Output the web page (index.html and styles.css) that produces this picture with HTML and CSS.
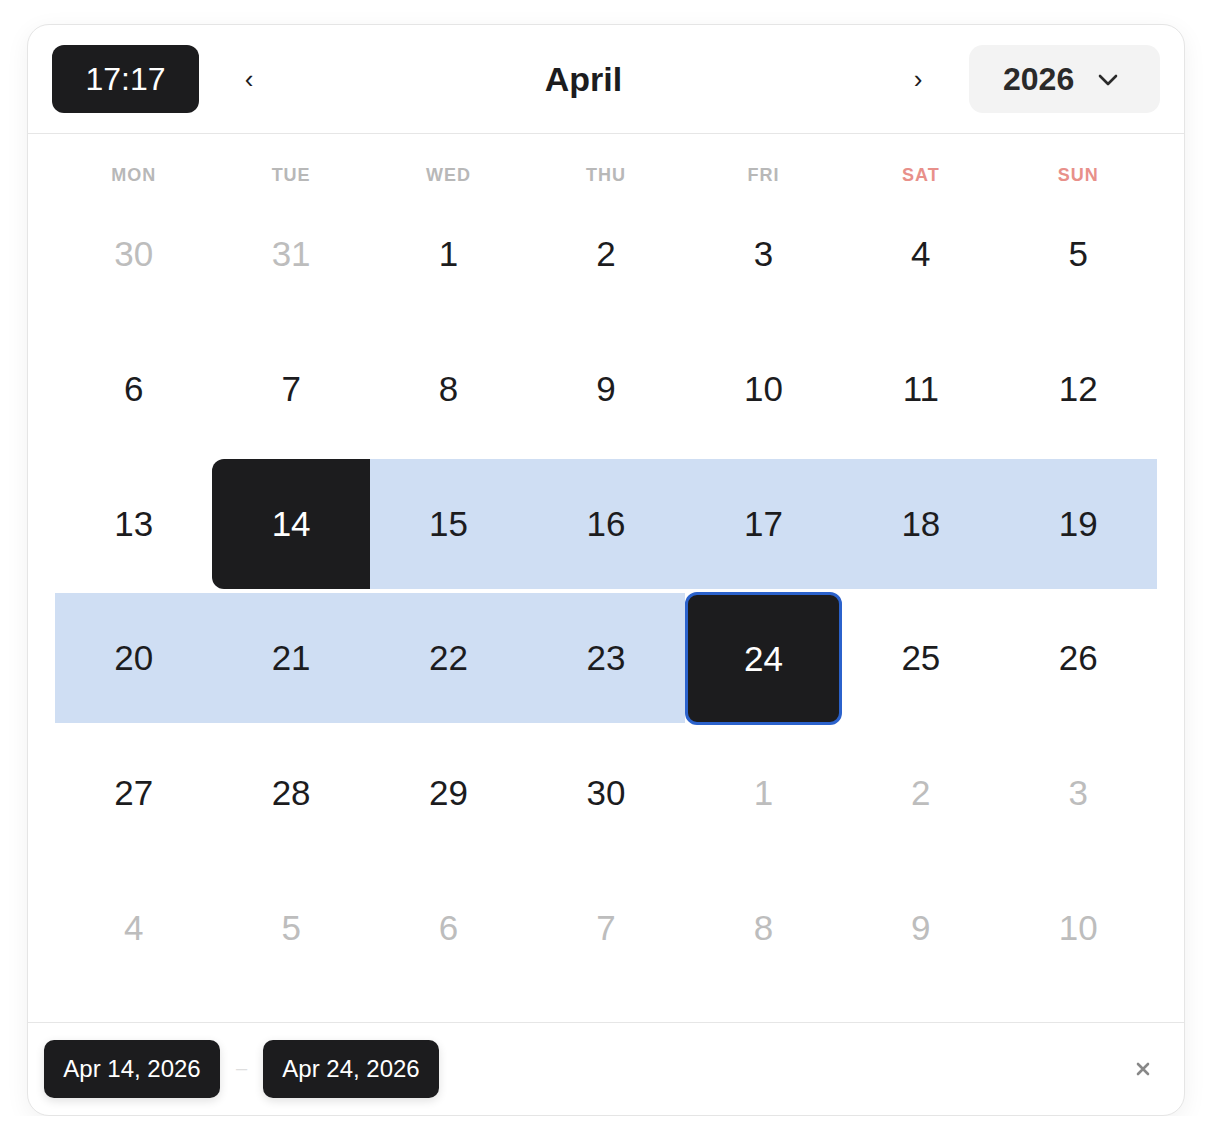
FILE: index.html
```html
<!DOCTYPE html>
<html lang="en">
<head>
<meta charset="utf-8">
<title>Date range picker</title>
<link rel="stylesheet" href="styles.css">
</head>
<body>
<div class="card">
  <header class="head">
    <button class="time">17:17</button>
    <button class="nav prev">‹</button>
    <div class="title">April</div>
    <button class="nav next">›</button>
    <button class="year">
      <span>2026</span>
      <svg class="chev" width="20" height="12" viewBox="0 0 20 12"><polyline points="2,2 10,10 18,2" fill="none" stroke="#2a2a2a" stroke-width="2.6" stroke-linecap="round" stroke-linejoin="round"/></svg>
    </button>
  </header>
  <section class="body">
    <div class="weekdays">
      <div>MON</div><div>TUE</div><div>WED</div><div>THU</div><div>FRI</div><div class="we">SAT</div><div class="we">SUN</div>
    </div>
    <div class="grid">
      <div class="d out">30</div><div class="d out">31</div><div class="d">1</div><div class="d">2</div><div class="d">3</div><div class="d">4</div><div class="d">5</div>
      <div class="d">6</div><div class="d">7</div><div class="d">8</div><div class="d">9</div><div class="d">10</div><div class="d">11</div><div class="d">12</div>
      <div class="d">13</div><div class="d start">14</div><div class="d in">15</div><div class="d in">16</div><div class="d in">17</div><div class="d in">18</div><div class="d in">19</div>
      <div class="d in">20</div><div class="d in">21</div><div class="d in">22</div><div class="d in">23</div><div class="d end">24</div><div class="d">25</div><div class="d">26</div>
      <div class="d">27</div><div class="d">28</div><div class="d">29</div><div class="d">30</div><div class="d out">1</div><div class="d out">2</div><div class="d out">3</div>
      <div class="d out">4</div><div class="d out">5</div><div class="d out">6</div><div class="d out">7</div><div class="d out">8</div><div class="d out">9</div><div class="d out">10</div>
    </div>
  </section>
  <footer class="foot">
    <div class="chip">Apr 14, 2026</div>
    <span class="dash">–</span>
    <div class="chip">Apr 24, 2026</div>
    <button class="clear" aria-label="Clear">
      <svg width="14" height="14" viewBox="0 0 14 14"><path d="M2 2 L12 12 M12 2 L2 12" stroke="#888" stroke-width="2.6" stroke-linecap="round"/></svg>
    </button>
  </footer>
</div>
</body>
</html>
```

FILE: styles.css
```css
* { box-sizing: border-box; }
html, body { margin: 0; background: #fff; }
body {
  padding: 24px 0 0 27px;
  font-family: "Liberation Sans", Arial, sans-serif;
  color: #1c1c1e;
}
button { font-family: inherit; border: 0; background: none; padding: 0; cursor: pointer; color: inherit; }

.card {
  width: 1158px;
  border: 1px solid #e5e5e5;
  border-radius: 22px;
  background: #fff;
  box-shadow: 0 6px 24px rgba(0,0,0,0.06);
  overflow: hidden;
}

.head {
  display: flex;
  align-items: center;
  padding: 20px 24px;
  border-bottom: 1px solid #e6e6e6;
}
.time {
  width: 147px;
  height: 68px;
  border-radius: 12px;
  background: #1c1c1e;
  color: #fff;
  font-size: 32px;
}
.nav {
  width: 40px;
  height: 40px;
  font-size: 26px;
  color: #1c1c1e;
}
.prev { margin-left: 30px; }
.next { margin-right: 31px; }
.title {
  flex: 1;
  text-align: center;
  font-size: 34px;
  font-weight: 700;
}
.year {
  width: 191px;
  height: 68px;
  border-radius: 14px;
  background: #f3f3f3;
  display: flex;
  align-items: center;
  padding-left: 34px;
  gap: 24px;
  font-size: 32px;
  font-weight: 700;
  color: #2a2a2a;
}
.chev { margin-top: 2px; }

.body { padding: 25px 27px 29px; }
.weekdays {
  display: grid;
  grid-template-columns: repeat(7, 1fr);
  height: 30px;
  padding-top: 2px;
  align-items: center;
  text-align: center;
  font-size: 18px;
  font-weight: 700;
  letter-spacing: 1px;
  color: #b8b8b8;
}
.weekdays .we { color: #e8908a; }

.grid {
  display: grid;
  grid-template-columns: repeat(7, 1fr);
  grid-auto-rows: 130px;
  row-gap: 4.8px;
}
.d {
  display: flex;
  align-items: center;
  justify-content: center;
  font-size: 35px;
  color: #1c1c1e;
}
.d.out { color: #bdbdbd; }
.d.in { background: #cfdef3; }
.d.start {
  background: #1c1c1e;
  color: #fff;
  border-radius: 12px 0 0 12px;
}
.d.end {
  background: #1c1c1e;
  color: #fff;
  border: 3px solid #2b62cc;
  border-radius: 12px;
  margin: -1px 0 -2px;
}

.foot {
  display: flex;
  align-items: center;
  border-top: 1px solid #e6e6e6;
  padding: 17px 16px 17px;
}
.chip {
  height: 58px;
  width: 176px;
  border-radius: 10px;
  background: #1c1c1e;
  color: #fff;
  font-size: 24px;
  display: flex;
  align-items: center;
  justify-content: center;
  box-shadow: 0 3px 10px rgba(0,0,0,0.12);
}
.dash {
  width: 43px;
  text-align: center;
  color: #dedede;
  font-size: 20px;
}
.clear {
  margin-left: auto;
  margin-right: 15px;
  width: 20px;
  height: 20px;
  display: flex;
  align-items: center;
  justify-content: center;
}
```
